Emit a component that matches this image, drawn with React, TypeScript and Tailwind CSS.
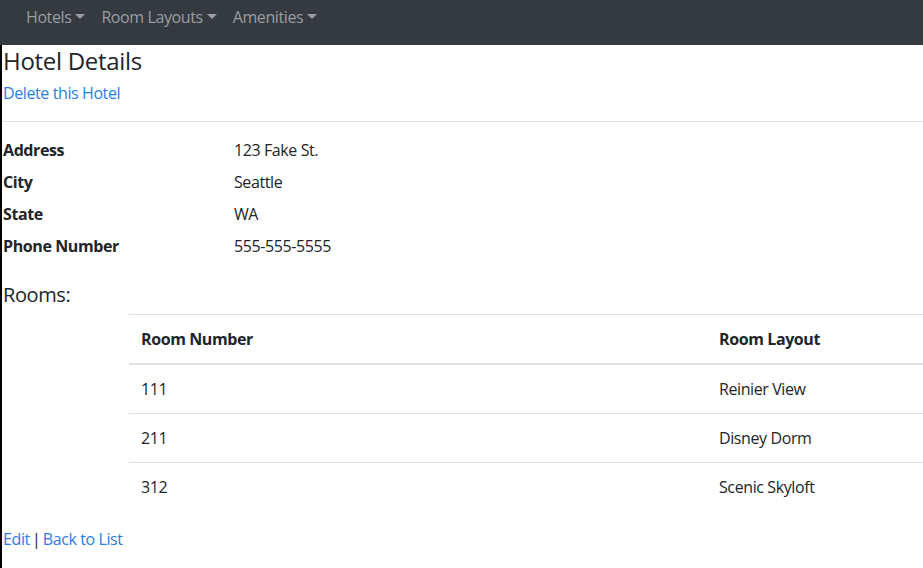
import React from "react";

const NAV_ITEMS = ["Hotels", "Room Layouts", "Amenities"];

const DETAILS: { label: string; value: string }[] = [
  { label: "Address", value: "123 Fake St." },
  { label: "City", value: "Seattle" },
  { label: "State", value: "WA" },
  { label: "Phone Number", value: "555-555-5555" },
];

const ROOMS: { number: string; layout: string }[] = [
  { number: "111", layout: "Reinier View" },
  { number: "211", layout: "Disney Dorm" },
  { number: "312", layout: "Scenic Skyloft" },
];

function Caret() {
  return (
    <span className="ml-[4px] inline-block h-0 w-0 align-[4px] border-x-[5px] border-t-[5px] border-x-transparent border-t-current" />
  );
}

export default function App() {
  return (
    <div
      className="w-[923px] h-[568px] overflow-hidden bg-white text-[16px] leading-[24px] tracking-[-0.4px] text-[#212529]"
      style={{ fontFamily: '"Open Sans", "Noto Sans", sans-serif' }}
    >
      {/* top nav, cropped at the top */}
      <nav className="h-[45px] bg-[#343a40] flex items-start pt-[5px] pl-[18px]">
        {NAV_ITEMS.map((item) => (
          <a key={item} className="px-2 text-[#9a9da0] whitespace-nowrap">
            {item}
            <Caret />
          </a>
        ))}
      </nav>

      <main className="border-l-2 border-black h-[523px] pl-px">
        <h4 className="text-[24px] leading-[29px] font-medium tracking-[-0.3px] pt-[1px] mb-[6px]">
          Hotel Details
        </h4>
        <a className="text-[#2a7ee0]">Delete this Hotel</a>

        <hr className="mt-[16px] mb-[16px] border-t border-black/10 -ml-px" />

        <dl className="flex flex-col gap-[8px]">
          {DETAILS.map((d) => (
            <div key={d.label} className="flex">
              <dt className="w-[231px] font-bold">{d.label}</dt>
              <dd>{d.value}</dd>
            </div>
          ))}
        </dl>

        <h5 className="text-[20px] leading-[24px] mt-[25px] mb-[7px]">Rooms:</h5>

        <table className="ml-[126px] w-[1000px] border-collapse">
          <thead>
            <tr className="border-t border-[#dee2e6] border-b-2">
              <th className="w-[578px] text-left font-bold px-3 py-3">Room Number</th>
              <th className="text-left font-bold px-3 py-3">Room Layout</th>
            </tr>
          </thead>
          <tbody>
            {ROOMS.map((r) => (
              <tr key={r.number} className="border-t border-[#dee2e6] first:border-t-0">
                <td className="px-3 py-3">{r.number}</td>
                <td className="px-3 py-3">{r.layout}</td>
              </tr>
            ))}
          </tbody>
        </table>

        <div className="mt-[16px] [word-spacing:-1.5px]">
          <a className="text-[#2a7ee0]">Edit</a> |{" "}
          <a className="text-[#2a7ee0] [word-spacing:0px]">Back to List</a>
        </div>
      </main>
    </div>
  );
}
